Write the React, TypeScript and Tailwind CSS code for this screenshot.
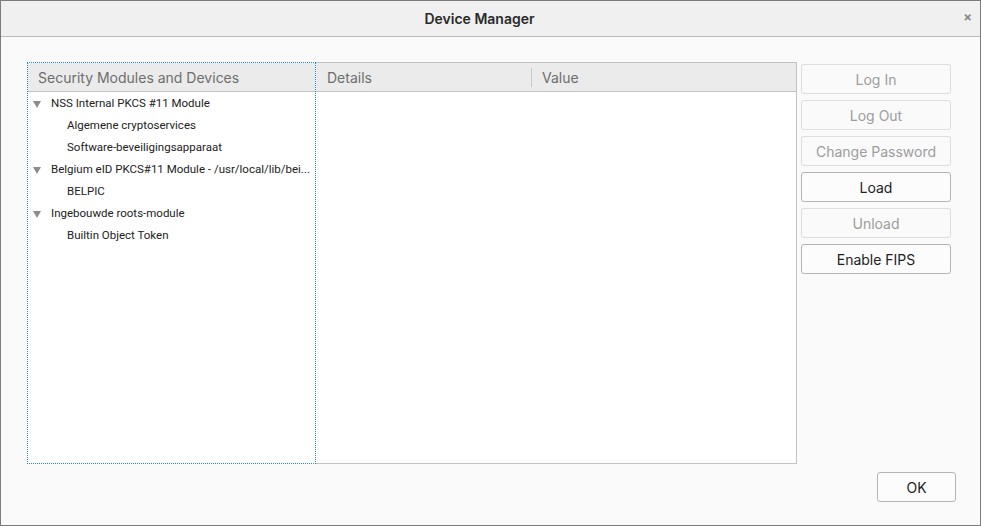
import { ReactNode } from "react";

const tree = [
  { label: "NSS Internal PKCS #11 Module", children: ["Algemene cryptoservices", "Software-beveiligingsapparaat"] },
  { label: "Belgium eID PKCS#11 Module - /usr/local/lib/bei...", children: ["BELPIC"] },
  { label: "Ingebouwde roots-module", children: ["Builtin Object Token"] },
];

const buttons = [
  { label: "Log In", enabled: false },
  { label: "Log Out", enabled: false },
  { label: "Change Password", enabled: false },
  { label: "Load", enabled: true },
  { label: "Unload", enabled: false },
  { label: "Enable FIPS", enabled: true },
];

function Btn({ children, enabled }: { children: ReactNode; enabled: boolean }) {
  return (
    <div
      className={
        enabled
          ? "h-[30px] w-[150px] flex items-center justify-center rounded-[3px] border border-[#b4b4b4] bg-[#fcfcfc] text-[14px] text-[#222]"
          : "h-[30px] w-[150px] flex items-center justify-center rounded-[3px] border border-[#dedede] bg-[#fafafa] text-[14px] text-[#9d9d9d]"
      }
    >
      {children}
    </div>
  );
}

export default function App() {
  return (
    <div
      className="w-[981px] h-[526px] bg-[#fafafa] border border-[#7c7c7c] flex flex-col overflow-hidden text-[#222]"
      style={{ fontFamily: "Inter, 'Liberation Sans', sans-serif" }}
    >
      {/* Title bar */}
      <div className="h-[36px] shrink-0 bg-[#f0f0f0] border-b border-[#bcbcbc] flex items-center relative">
        <div className="flex-1 text-center text-[14px] font-semibold text-[#2a2a2a] pr-[22px]">Device Manager</div>
        <span className="absolute right-[8px] top-[10px] text-[13px] font-bold text-[#8a8a8a] leading-none">×</span>
      </div>

      {/* Body */}
      <div className="flex-1 flex pl-[26px] pt-[25px] pr-[29px]">
        {/* Tree */}
        <div className="w-[289px] h-[402px] bg-white border border-dotted border-[#1a8ad4] flex flex-col">
          <div className="h-[29px] bg-[#ebebeb] border-b border-[#c3c3c3] flex items-center pl-[10px] text-[14px] text-[#6e6e6e]">
            Security Modules and Devices
          </div>
          <div className="pt-[1px]" style={{ fontFamily: "Roboto, 'Liberation Sans', sans-serif" }}>
            {tree.map((m) => (
              <div key={m.label}>
                <div className="h-[22px] flex items-center text-[11.5px] text-[#222] whitespace-nowrap">
                  <span className="w-[23px] shrink-0 pl-[5px] flex items-center">
                    <svg width="8" height="7" viewBox="0 0 8 7">
                      <path d="M0 0 H8 L4 7 Z" fill="#8c8c8c" />
                    </svg>
                  </span>
                  <span>{m.label}</span>
                </div>
                {m.children.map((c) => (
                  <div key={c} className="h-[22px] flex items-center pl-[39px] text-[11.5px] text-[#222]">
                    {c}
                  </div>
                ))}
              </div>
            ))}
          </div>
        </div>

        {/* Details table */}
        <div className="w-[481px] h-[402px] bg-white border border-l-0 border-[#c3c3c3] flex flex-col">
          <div className="h-[29px] bg-[#ebebeb] border-b border-[#c3c3c3] flex items-center text-[14px] text-[#6e6e6e]">
            <div className="w-[216px] pl-[11px] border-r border-[#c8c8c8] h-[19px] flex items-center">Details</div>
            <div className="pl-[10px]">Value</div>
          </div>
        </div>

        {/* Buttons */}
        <div className="ml-[4px] pt-[2px] flex flex-col gap-[6px]">
          {buttons.map((b) => (
            <Btn key={b.label} enabled={b.enabled}>
              {b.label}
            </Btn>
          ))}
        </div>
      </div>

      {/* Footer */}
      <div className="h-[63px] shrink-0 flex justify-end pr-[24px] pt-[8px]">
        <div className="h-[30px] w-[79px] flex items-center justify-center rounded-[3px] border border-[#b4b4b4] bg-[#fcfcfc] text-[14px] text-[#222]">
          OK
        </div>
      </div>
    </div>
  );
}
